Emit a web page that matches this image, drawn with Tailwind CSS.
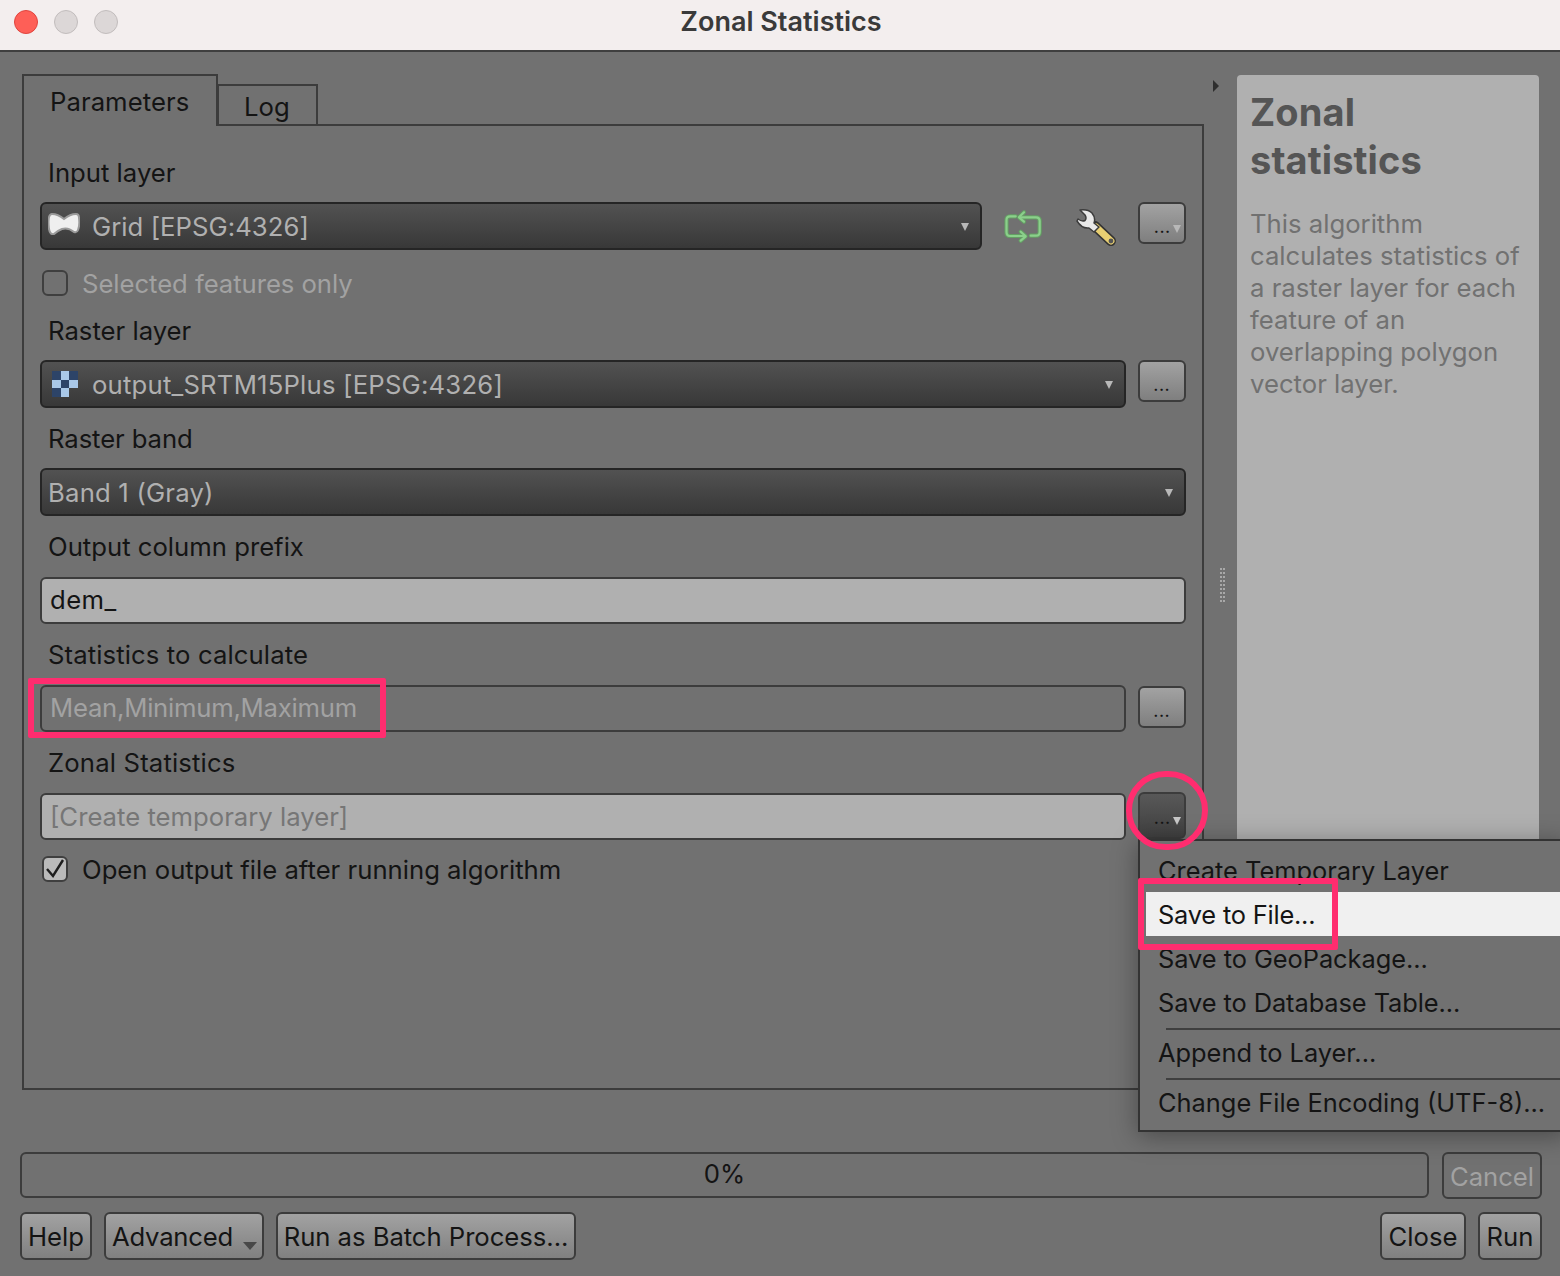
<!DOCTYPE html>
<html>
<head>
<meta charset="utf-8">
<script src="https://cdn.jsdelivr.net/npm/@tailwindcss/browser@4"></script>
</head>
<body class="font-['Inter',sans-serif] text-[25.7px] text-[#141414] bg-[#717171]">
<div class="relative w-[1560px] h-[1276px] overflow-hidden flex flex-col">
  <!-- title bar -->
  <div class="relative h-[52px] shrink-0 bg-[#f3eeee] border-b-2 border-[#3f3f3f] flex items-center justify-center pb-[6px]">
    <div class="absolute left-[14px] top-[10px] flex gap-[16px]">
      <div class="w-[24px] h-[24px] rounded-full bg-[#fe5f57] border border-[#e0443e]"></div>
      <div class="w-[24px] h-[24px] rounded-full bg-[#dcd7d7] border border-[#c2bdbd]"></div>
      <div class="w-[24px] h-[24px] rounded-full bg-[#dcd7d7] border border-[#c2bdbd]"></div>
    </div>
    <span class="text-[27px] font-semibold text-[#3a3a3a] ml-[2px]">Zonal Statistics</span>
  </div>

  <!-- main area -->
  <div class="flex pt-[22px] pl-[22px] h-[1052px] shrink-0">
    <!-- left column -->
    <div class="w-[1182px] shrink-0 flex flex-col">
      <div class="flex items-end h-[52px] relative z-10">
        <div class="w-[196px] h-[52px] border-2 border-b-0 border-[#3c3c3c] bg-[#717171] pl-[26px] pt-[9px] leading-[34px] tracking-[0.05px]">Parameters</div>
        <div class="w-[101px] h-[42px] -ml-px border-2 border-[#3c3c3c] pl-[25px] pt-[4px] leading-[34px]">Log</div>
      </div>
      <div class="-mt-[2px] h-[966px] border-2 border-[#3c3c3c] pl-[16px] pr-[16px] pt-[32px]">
        <div class="h-[30px] leading-[30px] pl-[8px]">Input layer</div>
        <div class="mt-[14px] flex items-start">
          <div class="w-[943px] h-[48px] pt-[3px] rounded-[6px] border-2 border-[#252525] bg-linear-to-b from-[#525252] to-[#383838] flex items-center pl-[6px] pr-[11px] text-[#b0b0b0] tracking-[0.05px]">
            <svg class="w-[32px] h-[22px] mr-[12px] -mt-[8px]" viewBox="0 0 32 22"><path d="M4 1Q10 1 16 6Q22 1 28 1Q31 1 31 5Q32 12 30 17Q29 20 26 19Q20 14 14 16Q9 18 6 21Q2 22 1 16Q0 8 1 4Q2 1 4 1Z" fill="#efefef" stroke="#9a9a9a" stroke-width="2"/></svg>
            <span class="flex-1">Grid [EPSG:4326]</span>
            <svg class="w-[8px] h-[8px] -mt-[2px]" viewBox="0 0 8 8"><path d="M0 0H8L4 8Z" fill="#b8b8b8"/></svg>
          </div>
          <svg class="w-[36px] h-[33px] ml-[24px] mt-[9px] overflow-visible" viewBox="0 0 36 33" fill="none" stroke-linejoin="round" stroke-linecap="round">
            <g stroke="#649e64" stroke-width="4.2">
              <path d="M9.7 5.3H4Q0.5 5.3 0.5 9V21Q0.5 25 4 25H19"/><path d="M14.7 20.7L19.7 25.3L14.7 29.7"/>
              <path d="M13.5 6.3H30Q33.7 6.3 33.7 10V21Q33.7 24.7 30 24.7H24.7"/><path d="M18 1.3L13 6.3L18 10.7"/>
            </g>
            <g stroke="#8bd08b" stroke-width="2.2">
              <path d="M9.7 5.3H4Q0.5 5.3 0.5 9V21Q0.5 25 4 25H19"/><path d="M14.7 20.7L19.7 25.3L14.7 29.7"/>
              <path d="M13.5 6.3H30Q33.7 6.3 33.7 10V21Q33.7 24.7 30 24.7H24.7"/><path d="M18 1.3L13 6.3L18 10.7"/>
            </g>
          </svg>
          <svg class="w-[40px] h-[38px] ml-[34px] mt-[7px]" viewBox="0 0 40 38">
            <path d="M19 17L35 32" stroke="#333" stroke-width="10" stroke-linecap="round"/>
            <path d="M20 18L35 32" stroke="#e8cf72" stroke-width="7" stroke-linecap="round"/>
            <path d="M4 1Q12 0 16 4Q20 9 18 14L23 18L18 23L13 19Q6 20 1 12L2 10Q6 13 9 11.5Q11 9 9 6Z" fill="#e9e9e9" stroke="#3c3c3c" stroke-width="1.5" stroke-linejoin="round"/>
            <circle cx="35" cy="32" r="2.4" fill="#555"/>
          </svg>
          <div class="ml-[22px] w-[48px] h-[42px] rounded-[6px] border-2 border-[#3c3c3c] bg-linear-to-b from-[#a2a2a2] to-[#7f7f7f] flex items-end justify-end pr-[3px] pb-[7px] gap-[2px]">
            <span class="text-[14px] leading-[14px] font-bold tracking-[1px]">...</span>
            <svg class="w-[8px] h-[8px] mb-[2px]" viewBox="0 0 8 8"><path d="M0 0H8L4 8Z" fill="#b8b8b8"/></svg>
          </div>
        </div>
        <div class="h-[26px] mt-[20px] flex items-center pl-[2px] gap-[14px] text-[#a2a2a2] tracking-[-0.05px]">
          <div class="w-[26px] h-[26px] rounded-[6px] border-2 border-[#3f3f3f]"></div>
          <span class="mt-[2px]">Selected features only</span>
        </div>
        <div class="h-[30px] leading-[30px] pl-[8px] mt-[20px]">Raster layer</div>
        <div class="mt-[14px] flex items-start">
          <div class="w-[1086px] h-[48px] pt-[3px] rounded-[6px] border-2 border-[#252525] bg-linear-to-b from-[#525252] to-[#383838] flex items-center pl-[10px] pr-[11px] text-[#b0b0b0] tracking-[0.2px]">
            <div class="grid grid-cols-3 w-[26px] h-[26px] mr-[14px] -mt-[3px]">
              <div class="bg-[#2d4468]"></div><div class="bg-[#a9c8e8]"></div><div class="bg-[#2d4468]"></div>
              <div class="bg-[#a9c8e8]"></div><div class="bg-[#2d4468]"></div><div class="bg-[#a9c8e8]"></div>
              <div class="bg-[#2d4468]"></div><div class="bg-[#a9c8e8]"></div><div></div>
            </div>
            <span class="flex-1">output_SRTM15Plus [EPSG:4326]</span>
            <svg class="w-[8px] h-[8px] -mt-[2px]" viewBox="0 0 8 8"><path d="M0 0H8L4 8Z" fill="#b8b8b8"/></svg>
          </div>
          <div class="ml-[12px] w-[48px] h-[42px] rounded-[6px] border-2 border-[#3c3c3c] bg-linear-to-b from-[#a2a2a2] to-[#7f7f7f] flex items-end justify-center pb-[7px]">
            <span class="text-[14px] leading-[14px] font-bold tracking-[1px]">...</span>
          </div>
        </div>
        <div class="h-[30px] leading-[30px] pl-[8px] mt-[16px] tracking-[-0.1px]">Raster band</div>
        <div class="mt-[14px] w-[1146px] h-[48px] pt-[3px] rounded-[6px] border-2 border-[#252525] bg-linear-to-b from-[#525252] to-[#383838] flex items-center pl-[6px] pr-[11px] text-[#b0b0b0] tracking-[0.2px]">
          <span class="flex-1">Band 1 (Gray)</span>
          <svg class="w-[8px] h-[8px] -mt-[2px]" viewBox="0 0 8 8"><path d="M0 0H8L4 8Z" fill="#b8b8b8"/></svg>
        </div>
        <div class="h-[30px] leading-[30px] pl-[8px] mt-[16px]">Output column prefix</div>
        <div class="mt-[15px] w-[1146px] h-[47px] rounded-[6px] border-2 border-[#3c3c3c] bg-[#b0b0b0] flex items-center pl-[8px] tracking-[0.4px]">dem_</div>
        <div class="h-[30px] leading-[30px] pl-[8px] mt-[16px] tracking-[0.1px]">Statistics to calculate</div>
        <div class="mt-[15px] flex items-start">
          <div class="w-[1086px] h-[47px] rounded-[6px] border-2 border-[#3c3c3c] flex items-center pl-[8px] text-[#a2a2a2] tracking-[-0.25px]">Mean,Minimum,Maximum</div>
          <div class="ml-[12px] w-[48px] h-[42px] mt-px rounded-[6px] border-2 border-[#3c3c3c] bg-linear-to-b from-[#a2a2a2] to-[#7f7f7f] flex items-end justify-center pb-[7px]">
            <span class="text-[14px] leading-[14px] font-bold tracking-[1px]">...</span>
          </div>
        </div>
        <div class="h-[30px] leading-[30px] pl-[8px] mt-[16px] tracking-[0.15px]">Zonal Statistics</div>
        <div class="mt-[15px] flex items-start">
          <div class="w-[1086px] h-[47px] pt-[2px] rounded-[6px] border-2 border-[#3c3c3c] bg-[#b0b0b0] flex items-center pl-[8px] text-[#767676]">[Create temporary layer]</div>
          <div class="ml-[12px] -mt-px w-[48px] h-[47px] rounded-[6px] border-2 border-[#3c3c3c] bg-linear-to-b from-[#585858] to-[#404040] flex items-end justify-end pr-[3px] pb-[11px] gap-[2px]">
            <span class="text-[14px] leading-[14px] font-bold tracking-[1px]">...</span>
            <svg class="w-[8px] h-[8px] mb-[1px]" viewBox="0 0 8 8"><path d="M0 0H8L4 8Z" fill="#c8c8c8"/></svg>
          </div>
        </div>
        <div class="h-[26px] mt-[16px] flex items-center pl-[2px] gap-[14px]">
          <div class="w-[26px] h-[26px] rounded-[6px] border-2 border-[#3f3f3f] bg-[#bababa] flex items-center justify-center">
            <svg class="w-[22px] h-[20px]" viewBox="0 0 22 20" fill="none" stroke="#1e1e1e" stroke-width="2.4"><path d="M3 10L9 17L19 1"/></svg>
          </div>
          <span class="mt-[2px]">Open output file after running algorithm</span>
        </div>
      </div>
    </div>
    <!-- splitter -->
    <div class="w-[33px] shrink-0 relative">
      <svg class="absolute left-[9px] top-[6px] w-[6px] h-[12px]" viewBox="0 0 6 12"><path d="M0 0L6 6L0 12Z" fill="#2e2e2e"/></svg>
      <div class="absolute left-[16px] top-[494px] w-[5px] h-[34px] border-x-2 border-dotted border-[#a8a8a8]"></div>
    </div>
    <!-- help panel -->
    <div class="w-[302px] h-[1030px] mt-px shrink-0 rounded-[4px] bg-[#b0b0b0] pl-[13px] pr-[6px] pt-[13px]">
      <div class="text-[38px] leading-[48px] font-bold text-[#555555] tracking-[0.1px]">Zonal statistics</div>
      <div class="mt-[24px] leading-[32px] text-[#717171]">This algorithm calculates statistics of a raster layer for each feature of an overlapping polygon vector layer.</div>
    </div>
  </div>

  <!-- bottom -->
  <div class="pl-[20px] pr-[18px] flex flex-col">
    <div class="flex items-start h-[47px] mt-[48px] gap-[13px]">
      <div class="w-[1409px] h-[46px] pb-[2px] rounded-[6px] border-2 border-[#3c3c3c] flex items-center justify-center">0%</div>
      <div class="w-[100px] h-[47px] pt-[3px] rounded-[6px] border-2 border-[#3c3c3c] flex items-center justify-center text-[#a2a2a2] tracking-[-0.05px]">Cancel</div>
    </div>
    <div class="flex h-[48px] mt-[13px] gap-[12px]">
      <div class="w-[72px] pt-[2px] rounded-[6px] border-2 border-[#3c3c3c] bg-linear-to-b from-[#a2a2a2] to-[#808080] flex items-center justify-center">Help</div>
      <div class="w-[160px] pt-[2px] rounded-[6px] border-2 border-[#3c3c3c] bg-linear-to-b from-[#a2a2a2] to-[#808080] flex items-center pl-[6px] relative tracking-[-0.25px]">Advanced
        <svg class="absolute right-[5px] bottom-[8px] w-[14px] h-[8px]" viewBox="0 0 14 8"><path d="M0 0H14L7 8Z" fill="#484848"/></svg>
      </div>
      <div class="w-[300px] pt-[2px] rounded-[6px] border-2 border-[#3c3c3c] bg-linear-to-b from-[#a2a2a2] to-[#808080] flex items-center justify-center tracking-[-0.05px]">Run as Batch Process...</div>
      <div class="flex-1"></div>
      <div class="w-[86px] pt-[2px] rounded-[6px] border-2 border-[#3c3c3c] bg-linear-to-b from-[#a2a2a2] to-[#808080] flex items-center justify-center">Close</div>
      <div class="w-[64px] pt-[2px] rounded-[6px] border-2 border-[#3c3c3c] bg-linear-to-b from-[#a2a2a2] to-[#808080] flex items-center justify-center">Run</div>
    </div>
  </div>

  <!-- popup menu -->
  <div class="absolute left-[1138px] top-[839px] w-[430px] h-[293px] bg-[#717171] border-2 border-r-0 border-[#333333] shadow-[0_4px_24px_rgba(0,0,0,0.35)] pt-[7px] text-[25.4px]">
    <div class="h-[44px] leading-[46px] pl-[18px]">Create Temporary Layer</div>
    <div class="h-[44px] leading-[46px] pl-[12px] ml-[6px] bg-[#f0f0f0] tracking-[-0.2px]">Save to File...</div>
    <div class="h-[44px] leading-[46px] pl-[18px] tracking-[-0.05px]">Save to GeoPackage...</div>
    <div class="h-[44px] leading-[46px] pl-[18px] tracking-[-0.08px]">Save to Database Table...</div>
    <div class="h-[2px] bg-[#3f3f3f] ml-[26px] mt-[4px]"></div>
    <div class="h-[44px] leading-[46px] pl-[18px]">Append to Layer...</div>
    <div class="h-[2px] bg-[#3f3f3f] ml-[26px] mt-[4px]"></div>
    <div class="h-[44px] leading-[46px] pl-[18px]">Change File Encoding (UTF-8)...</div>
  </div>

  <!-- annotations -->
  <div class="absolute left-[28px] top-[678px] w-[358px] h-[60px] border-[6px] border-[#ff2d6f] rounded-[2px]"></div>
  <div class="absolute left-[1126px] top-[771px] w-[82px] h-[79px] border-[6px] border-[#ff2d6f] rounded-full"></div>
  <div class="absolute left-[1138px] top-[878px] w-[200px] h-[72px] border-[6px] border-[#ff2d6f] rounded-[2px]"></div>
</div>
</body>
</html>
